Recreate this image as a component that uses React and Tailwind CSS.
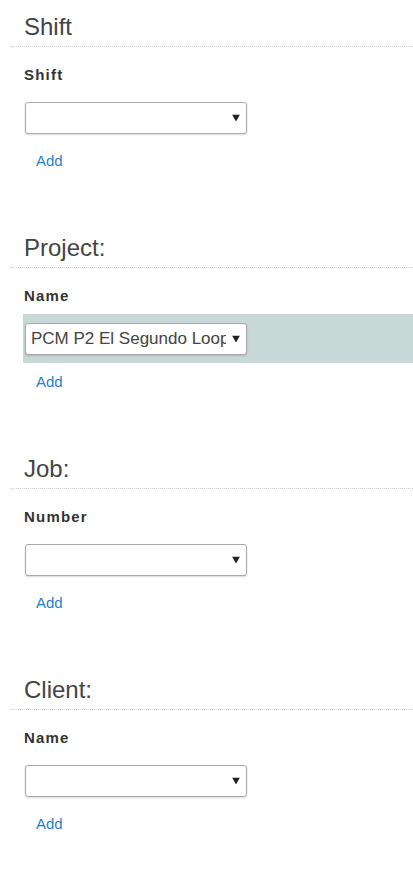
import React from 'react';

const sections = [
  { title: 'Shift', label: 'Shift', value: '' },
  { title: 'Project:', label: 'Name', value: 'PCM P2 El Segundo Loop', highlight: true },
  { title: 'Job:', label: 'Number', value: '' },
  { title: 'Client:', label: 'Name', value: '' },
];

function Dropdown({ value }) {
  return (
    <div className="relative w-[222px] h-[32px] bg-white border border-[#a9a9a9] rounded-[3px] shadow-[0_1px_2px_rgba(0,0,0,0.15)] overflow-hidden">
      <div className="absolute inset-y-0 left-0 right-[20px] flex items-center pl-[5px] text-[17px] text-[#444] whitespace-nowrap overflow-hidden">
        {value}
      </div>
      <svg className="absolute right-[6px] top-1/2 -translate-y-1/2" width="8" height="7" viewBox="0 0 8 7">
        <path d="M0 0 L8 0 L4 7 Z" fill="#222" />
      </svg>
    </div>
  );
}

export default function App() {
  return (
    <div className="min-h-[890px] bg-white pt-[13px] pl-[11px] font-['Liberation_Sans',Arial,sans-serif]">
      {sections.map((s, i) => (
        <div key={i} className={i > 0 ? 'mt-[64px]' : ''}>
          <h2 className="pl-[13px] pb-[5px] text-[24px] leading-[28px] text-[#444] border-b border-dotted border-[#cfcfcf]">
            {s.title}
          </h2>
          <div className="mt-[19px] pl-[13px] text-[15px] leading-[18px] font-bold tracking-[1.2px] text-[#333]">
            {s.label}
          </div>
          <div className={`mt-[9px] ml-[12px] pl-[2px] pt-[9px] pb-[8px] ${s.highlight ? 'bg-[#c7d8d6]' : ''}`}>
            <Dropdown value={s.value} />
          </div>
          <div className="mt-[10px] pl-[25px] text-[15px] leading-[18px] text-[#1f7fd0]">
            <a href="#">Add</a>
          </div>
        </div>
      ))}
    </div>
  );
}
